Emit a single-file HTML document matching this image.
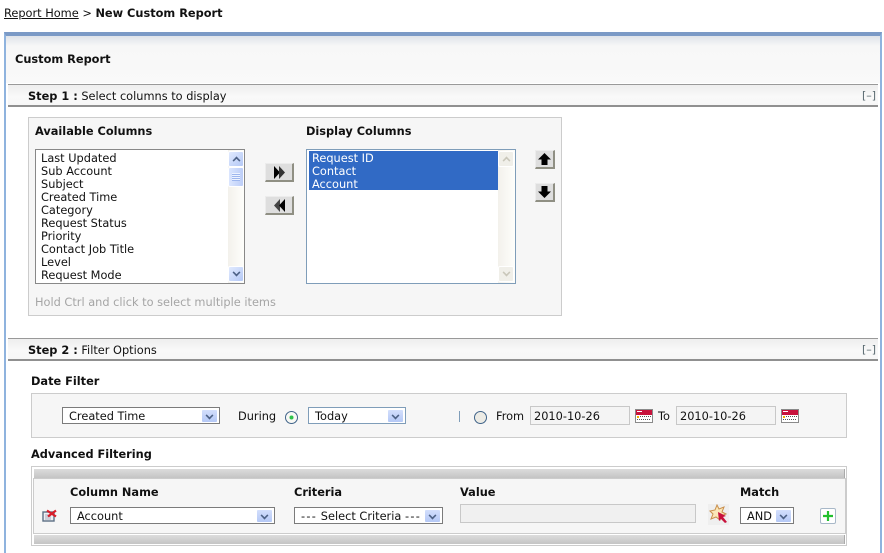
<!DOCTYPE html>
<html><head><meta charset="utf-8">
<style>
*{box-sizing:border-box}
html,body{margin:0;padding:0;width:884px;height:553px;overflow:hidden;background:#fff}
body{font:11.35px/13px "DejaVu Sans","Liberation Sans",sans-serif;color:#111;position:relative}
.a{position:absolute}
.t{position:absolute;white-space:nowrap}
b{font-weight:bold}
.bar{position:absolute;left:8px;width:870px;height:23px;border-top:1px solid #999;border-bottom:2px solid #909090;background:linear-gradient(#eee,#f9f9f9 60%,#f7f7f7)}
.box{position:absolute;background:#f6f6f6;border:1px solid #ccc}
.sel{position:absolute;height:17px;background:#fff;border:1px solid #7b7b7b;padding:2px 6px;line-height:13px;white-space:nowrap}
.sel i{position:absolute;right:2px;top:2px;width:15px;height:12px;background:linear-gradient(#d3dffc,#b4c8f6);border-radius:1px}
.sel i:after,.sb i:after{content:"";position:absolute;left:4px;top:2px;width:5px;height:5px;border-right:2px solid #4d6185;border-bottom:2px solid #4d6185;transform:rotate(45deg) scale(.8)}
.sb{position:absolute;background:linear-gradient(90deg,#f3f1ec,#fefefb)}
.sb i{position:absolute;left:0;width:16px;height:16px;background:linear-gradient(135deg,#e1eafe,#b4c8f6);border:1px solid #fff;border-radius:2px}
.sb i.up:after{transform:rotate(225deg) scale(.8);top:5px}
.sb.off i{background:#f0efe9}
.sb.off i:after{border-color:#c9c7ba}
.list{position:absolute;background:#fff;padding:2px 0}
.list div{height:13px;padding-left:5px;line-height:13px;white-space:nowrap}
.btn{position:absolute;background:#dedede;border-top:1px solid #ececec;border-left:1px solid #ececec;border-right:2px solid #8f8f83;border-bottom:2px solid #8f8f83}
.inp{position:absolute;background:#f4f4f4;border:1px solid #c8c8c8;padding:3px 3px;line-height:13px}
.bar2{position:absolute;left:34px;width:811px;height:9px;background:linear-gradient(#dcdcdc,#c4c4c4);border-right:1px solid #aaa}
.h{letter-spacing:1.3px}
.m{position:absolute;white-space:nowrap;left:862px;font-size:11px;color:#5a6a70}
</style></head><body>

<div class="t" style="left:4px;top:7px"><span style="text-decoration:underline">Report Home</span> &gt; <b>New Custom Report</b></div>

<!-- panel -->
<div class="a" style="left:4px;top:32px;width:878px;height:521px;border-left:2px solid #8fb3de;border-right:2px solid #8fb3de;border-top:4px solid #7b9ac6"></div>
<div class="a" style="left:6px;top:36px;width:874px;height:47px;background:linear-gradient(#dfe3e9,#f7f7f7 10px,#f9f9f9 100%)"></div>
<div class="t" style="left:15px;top:53px"><b>Custom Report</b></div>

<!-- step 1 -->
<div class="bar" style="top:84px"></div>
<div class="t" style="left:28px;top:90px"><b>Step 1 :</b> Select columns to display</div>
<div class="m" style="top:89px">[&#8211;]</div>

<div class="box" style="left:28px;top:117px;width:534px;height:199px"></div>
<div class="t" style="left:35px;top:125px"><b>Available Columns</b></div>
<div class="t" style="left:306px;top:125px"><b>Display Columns</b></div>

<div class="a" style="left:35px;top:149px;width:210px;height:135px;border:1px solid #888;background:#fff"></div>
<div class="list" style="left:36px;top:150px;width:192px;height:133px">
<div>Last Updated</div><div>Sub Account</div><div>Subject</div><div>Created Time</div><div>Category</div><div>Request Status</div><div>Priority</div><div>Contact Job Title</div><div>Level</div><div>Request Mode</div>
</div>
<div class="sb" style="left:228px;top:150px;width:16px;height:133px">
<i class="up" style="top:1px"></i>
<span class="a" style="left:0;top:17px;width:16px;height:20px;background:linear-gradient(90deg,#dbe6fe,#bccdf8);border:1px solid #fff;border-radius:2px"><span class="a" style="left:3px;top:5px;width:8px;height:8px;background:repeating-linear-gradient(#eef3ff 0 1px,#9db6ee 1px 2px)"></span></span>
<i style="top:116px"></i>
</div>

<div class="a" style="left:306px;top:149px;width:210px;height:135px;border:1px solid #7f9db9;background:#fff"></div>
<div class="a" style="left:309px;top:151px;width:189px;height:39px;background:#316ac5"></div>
<div class="list" style="left:307px;top:150px;width:191px;height:133px;background:none;color:#fff;padding-top:2px">
<div style="padding-left:5px">Request ID</div><div>Contact</div><div>Account</div>
</div>
<div class="sb off" style="left:498px;top:150px;width:17px;height:133px">
<i class="up" style="top:1px"></i><i style="top:116px"></i>
</div>

<div class="btn" style="left:265px;top:163px;width:29px;height:19px"></div>
<svg class="a" style="left:274px;top:166px" width="11" height="13"><path d="M0 0L6 6.500L0 13z" fill="#000"/><path d="M5 0L11 6.500L5 13z" fill="#333"/></svg>
<div class="btn" style="left:265px;top:196px;width:29px;height:19px"></div>
<svg class="a" style="left:274px;top:199px" width="11" height="13"><path d="M6 0L0 6.500L6 13z" fill="#444"/><path d="M11 0L5 6.500L11 13z" fill="#000"/></svg>

<div class="btn" style="left:535px;top:150px;width:20px;height:19px"></div>
<svg class="a" style="left:538px;top:153px" width="13" height="12"><path d="M6.500 0L13 6.500H9.500V12H3.500V6.500H0z" fill="#000"/></svg>
<div class="btn" style="left:535px;top:183px;width:20px;height:19px"></div>
<svg class="a" style="left:538px;top:186px" width="13" height="12"><path d="M3.500 0H9.500V5.500H13L6.500 12L0 5.500H3.500z" fill="#000"/></svg>

<div class="t" style="left:35px;top:296px;color:#a5a5a5">Hold Ctrl and click to select multiple items</div>

<!-- step 2 -->
<div class="bar" style="top:338px"></div>
<div class="t" style="left:28px;top:344px"><b>Step 2 :</b> Filter Options</div>
<div class="m" style="top:343px">[&#8211;]</div>

<div class="t" style="left:31px;top:375px"><b>Date Filter</b></div>
<div class="box" style="left:31px;top:393px;width:816px;height:45px"></div>
<div class="sel" style="left:62px;top:407px;width:158px">Created Time<i></i></div>
<div class="t" style="left:238px;top:410px">During</div>
<svg class="a" style="left:284px;top:410px" width="15" height="15"><circle cx="7.500" cy="7.500" r="6" fill="#f8f8f4" stroke="#3f6389"/><circle cx="7.500" cy="7.500" r="2" fill="#2fc24a"/></svg>
<div class="sel" style="left:308px;top:407px;width:98px;border-color:#7f9db9">Today<i></i></div>
<div class="a" style="left:459px;top:411px;width:1px;height:11px;background:#7f9db9"></div>
<svg class="a" style="left:473px;top:410px" width="15" height="15"><circle cx="7.500" cy="7.500" r="6" fill="#ecebe5" stroke="#3f6389"/></svg>
<div class="t" style="left:496px;top:410px">From</div>
<div class="inp" style="left:530px;top:406px;width:100px;height:19px">2010-10-26</div>
<svg class="a" style="left:635px;top:409px" width="18" height="14"><rect x=".5" y=".5" width="17" height="13" fill="#fff" stroke="#8a8a8a"/><rect x="1" y="1" width="16" height="5" fill="#c8123c"/><rect x="2" y="2" width="5" height="1" fill="#fff"/><rect x="2" y="7" width="2" height="2" fill="#f0b000"/><path d="M5 7.500H16M2 10.500H16" stroke="#555" stroke-dasharray="1 1"/></svg>
<div class="t" style="left:658px;top:410px">To</div>
<div class="inp" style="left:676px;top:406px;width:100px;height:19px">2010-10-26</div>
<svg class="a" style="left:781px;top:409px" width="18" height="14"><rect x=".5" y=".5" width="17" height="13" fill="#fff" stroke="#8a8a8a"/><rect x="1" y="1" width="16" height="5" fill="#c8123c"/><rect x="2" y="2" width="5" height="1" fill="#fff"/><rect x="2" y="7" width="2" height="2" fill="#f0b000"/><path d="M5 7.500H16M2 10.500H16" stroke="#555" stroke-dasharray="1 1"/></svg>

<div class="t" style="left:31px;top:448px"><b>Advanced Filtering</b></div>
<div class="a" style="left:31px;top:466px;width:816px;height:80px;border:1px solid #ccc;background:#fff"></div>
<div class="bar2" style="top:469px"></div>
<div class="box" style="left:33px;top:478px;width:813px;height:56px"></div>
<div class="bar2" style="top:535px"></div>

<div class="t" style="left:70px;top:486px"><b>Column Name</b></div>
<div class="t" style="left:294px;top:486px"><b>Criteria</b></div>
<div class="t" style="left:460px;top:486px"><b>Value</b></div>
<div class="t" style="left:740px;top:486px"><b>Match</b></div>

<svg class="a" style="left:42px;top:509px" width="16" height="14"><rect x="1" y="3" width="11" height="9" fill="#eef0f4" stroke="#5d6f85" stroke-width="1.400"/><path d="M3 6H9M3 8H9M3 10H9" stroke="#aab"/><path d="M5 1.500L14 7.500M14 1.500L6 7.500" stroke="#d81e2a" stroke-width="2.200"/></svg>
<div class="sel" style="left:70px;top:507px;width:205px">Account<i></i></div>
<div class="sel" style="left:294px;top:507px;width:149px;padding-left:6px"><span class="h">---</span> Select Criteria <span class="h">---</span><i></i></div>
<div class="a" style="left:460px;top:504px;width:236px;height:19px;background:#f0f0f0;border:1px solid #c8c8c8"></div>
<svg class="a" style="left:708px;top:504px" width="21" height="21"><rect width="21" height="21" fill="#efefef"/><path d="M9 1L11 5L16 3L14 8L18 10L13 12L12 16L8 13L3 15L5 10L2 7L7 6z" fill="#fbe7b8" stroke="#c98f4c"/><path d="M10 8L18 12L15 13L19 18L17 19L13 15L11 17z" fill="#c8123c"/></svg>
<div class="sel" style="left:740px;top:507px;width:54px">AND<i></i></div>
<div class="a" style="left:820px;top:508px;width:16px;height:16px;background:#fff;border:1px solid #a8b8c8;border-radius:2px"></div>
<svg class="a" style="left:820px;top:508px" width="16" height="16"><path d="M8 3V13M3 8H13" stroke="#22c02e" stroke-width="2.200"/></svg>

</body></html>
